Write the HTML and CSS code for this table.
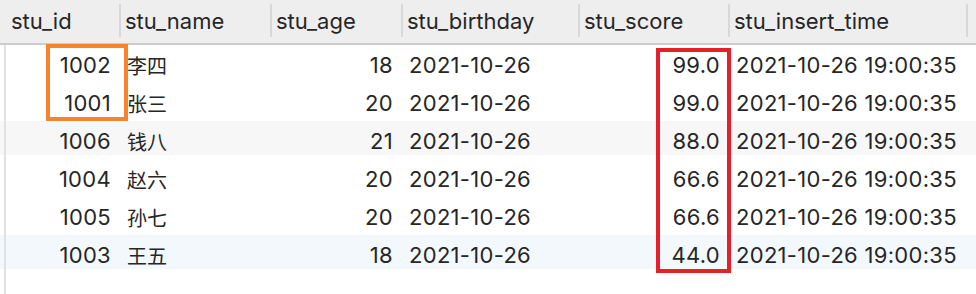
FILE: index.html
```html
<!DOCTYPE html>
<html lang="zh">
<head>
<meta charset="utf-8">
<title>student</title>
<link rel="stylesheet" href="styles.css">
</head>
<body>
<div class="grid">
  <div class="head">
    <div class="hc first">stu_id</div>
    <div class="hc">stu_name</div>
    <div class="hc">stu_age</div>
    <div class="hc">stu_birthday</div>
    <div class="hc">stu_score</div>
    <div class="hc">stu_insert_time</div>
    <div class="hc"></div>
  </div>
  <div class="rows">
    <div class="row"><div class="c num">1002</div><div class="c txt cjk">李四</div><div class="c num">18</div><div class="c txt">2021-10-26</div><div class="c num">99.0</div><div class="c txt">2021-10-26 19:00:35</div><div class="c"></div></div>
    <div class="row"><div class="c num">1001</div><div class="c txt cjk">张三</div><div class="c num">20</div><div class="c txt">2021-10-26</div><div class="c num">99.0</div><div class="c txt">2021-10-26 19:00:35</div><div class="c"></div></div>
    <div class="row gray"><div class="c num">1006</div><div class="c txt cjk">钱八</div><div class="c num">21</div><div class="c txt">2021-10-26</div><div class="c num">88.0</div><div class="c txt">2021-10-26 19:00:35</div><div class="c"></div></div>
    <div class="row"><div class="c num">1004</div><div class="c txt cjk">赵六</div><div class="c num">20</div><div class="c txt">2021-10-26</div><div class="c num">66.6</div><div class="c txt">2021-10-26 19:00:35</div><div class="c"></div></div>
    <div class="row"><div class="c num">1005</div><div class="c txt cjk">孙七</div><div class="c num">20</div><div class="c txt">2021-10-26</div><div class="c num">66.6</div><div class="c txt">2021-10-26 19:00:35</div><div class="c"></div></div>
    <div class="row blue"><div class="c num">1003</div><div class="c txt cjk">王五</div><div class="c num">18</div><div class="c txt">2021-10-26</div><div class="c num">44.0</div><div class="c txt">2021-10-26 19:00:35</div><div class="c"></div></div>
  </div>
  <div class="mark mark-orange"></div>
  <div class="mark mark-red"></div>
</div>
</body>
</html>
```
FILE: styles.css
```css
html, body {
  margin: 0;
  padding: 0;
  background: #ffffff;
}
body {
  width: 976px;
  height: 294px;
  overflow: hidden;
  font-family: "Inter", "Noto Sans CJK SC", sans-serif;
  font-size: 22px;
  color: #262626;
}
.grid {
  position: relative;
  height: 294px;
}
.head, .row {
  display: grid;
  grid-template-columns: 119px 151px 131px 177px 150px 238px 10px;
}
.head {
  background: #eeeeee;
  border-bottom: 2px solid #cbcbcb;
  padding: 4px 0 6px;
}
.hc {
  box-sizing: border-box;
  height: 33px;
  border-left: 2px solid #d8d8d8;
  padding-left: 4px;
  display: flex;
  align-items: center;
  white-space: nowrap;
}
.hc.first {
  border-left: none;
  padding-left: 11px;
}
.rows {
  height: 249px;
  background: linear-gradient(to right, transparent 4px, #e1e1e1 4px 6px, transparent 6px);
}
.row {
  height: 38px;
  letter-spacing: 0.3px;
  background: linear-gradient(to right, transparent 4px, #e1e1e1 4px 6px, transparent 6px);
}
.row.gray {
  background:
    linear-gradient(to right, transparent 4px, #e1e1e1 4px 6px, transparent 6px),
    linear-gradient(#f7f7f7 0 34px, transparent 34px);
}
.row.blue {
  background:
    linear-gradient(to right, transparent 4px, #e1e1e1 4px 6px, transparent 6px),
    linear-gradient(#f3f8fd 0 34px, transparent 34px);
}
.c {
  box-sizing: border-box;
  display: flex;
  align-items: center;
  padding-top: 2px;
  white-space: nowrap;
}
.c.num {
  justify-content: flex-end;
  padding-right: 8px;
}
.c.txt {
  padding-left: 8px;
}
.c.cjk {
  font-size: 20px;
  letter-spacing: 0;
}
.mark {
  position: absolute;
  box-sizing: border-box;
  border: 4px solid;
}
.mark-orange {
  left: 46px;
  top: 44px;
  width: 82px;
  height: 77px;
  border-color: #f7842a;
}
.mark-red {
  left: 656px;
  top: 48px;
  width: 75px;
  height: 225px;
  border-color: #e5202a;
}
```
